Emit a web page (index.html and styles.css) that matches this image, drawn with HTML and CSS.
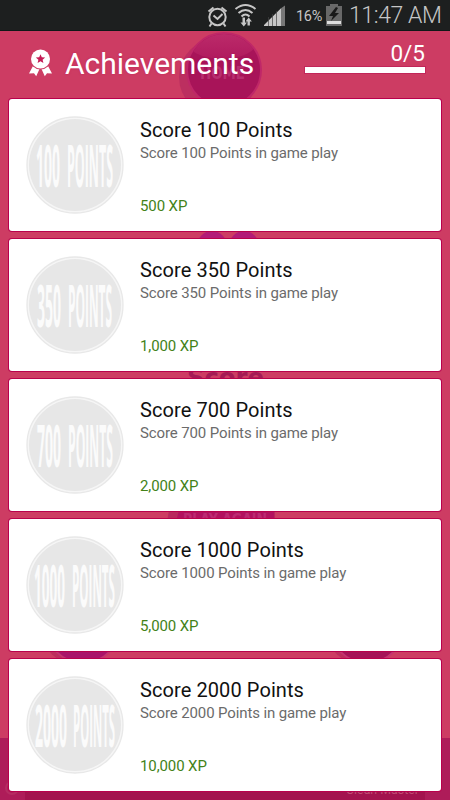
FILE: index.html
```html
<!DOCTYPE html>
<html lang="en">
<head>
<meta charset="utf-8">
<title>Achievements</title>
<link rel="stylesheet" href="styles.css">
</head>
<body>
<div class="screen">
  <svg class="backdrop" viewBox="0 0 450 800" aria-hidden="true">
    <defs>
      <linearGradient id="gloss" x1="0" y1="0" x2="0" y2="1">
        <stop offset="0" stop-color="#c23370"/><stop offset="1" stop-color="#b01a5e"/>
      </linearGradient>
      <clipPath id="home"><circle cx="224" cy="70" r="36"/></clipPath>
    </defs>
    <rect width="450" height="800" fill="#cd3c63"/>
    <circle cx="218" cy="77" r="39" fill="#bc2f60"/>
    <circle cx="224" cy="70" r="37" fill="#a81459" stroke="#bf2768" stroke-width="2"/>
    <ellipse cx="222" cy="40" rx="36" ry="19" fill="url(#gloss)" clip-path="url(#home)"/>
    <text x="200" y="79" class="ghost" font-size="18" textLength="45" lengthAdjust="spacingAndGlyphs" fill="#b83070">HOME</text>
    <circle cx="212" cy="246" r="15" fill="#b31b77"/><circle cx="244" cy="246" r="15" fill="#b31b77"/>
    <circle cx="212" cy="243" r="5" fill="#c22770"/><circle cx="244" cy="243" r="5" fill="#c22770"/>
    <text x="187" y="386" class="ghost" font-size="24" textLength="77" lengthAdjust="spacingAndGlyphs" fill="#a51b55">Score</text>
    <path d="M169 510h106v12H167z" fill="#b9285e"/><path d="M179 510h95v12H176z" fill="#b2125f"/>
    <text x="183" y="525" class="ghost" font-size="16" textLength="84" lengthAdjust="spacingAndGlyphs" fill="#bd2b72">PLAY AGAIN</text>
    <circle cx="78" cy="628" r="37" fill="#bd2d5d"/><circle cx="83" cy="626" r="37" fill="#aa1469" stroke="#c53370" stroke-width="2"/>
    <circle cx="363" cy="628" r="37" fill="#bd2d5d"/><circle cx="367" cy="626" r="37" fill="#a61357" stroke="#c53370" stroke-width="2"/>
    <rect y="738" width="450" height="62" fill="#ae1c59"/>
    <rect x="25" y="738" width="400" height="62" fill="#a3134e"/>
    <circle cx="12" cy="788" r="6" fill="none" stroke="#b52c62" stroke-width="2"/>
    <text x="346" y="794" font-size="13" textLength="73" lengthAdjust="spacingAndGlyphs" fill="#c04a74">Clean Master</text>
  </svg>

  <div class="status">
    <svg class="status-icons" viewBox="0 0 90 30" aria-hidden="true">
      <g fill="none" stroke="#c6c6c6" stroke-width="2">
        <circle cx="17.500" cy="17" r="8.200"/>
        <path d="M13.500 15.500l4 3.500 5-5M8.500 11.500l5-4M26.500 11.500l-5-4M11.500 23.500l-2 3M23.500 23.500l2 3"/>
        <path d="M35.500 9q10-8 20 0M38.500 13q7-6 14 0M41.500 16.500q4-4 8 0"/>
      </g>
      <path fill="#c6c6c6" d="M42.500 17.500h2.500v5h2l-3.200 4-3.300-4h2zM47.500 25.500v-4h-2l3.200-4 3.200 4h-2v4zM64 26V25L81 8.300V26z"/>
      <path d="M81 8.300l4-2.800V26h-4z" fill="#777"/>
      <path d="M68.500 17v9M72.500 14v12M76.500 11v15" stroke="#444" stroke-width=".7"/>
    </svg>
    <span class="percent">16%</span>
    <svg class="battery" viewBox="0 0 16 22" aria-hidden="true">
      <path d="M4 0h8v2h4v20H0V2h4z" fill="#686868"/><path d="M1 17h14v3H1z" fill="#dedede"/>
      <path d="M10 3L3 12h4l-2 5 8-8H9l3-5z" fill="#191919"/>
    </svg>
    <span class="time">11:47 AM</span>
  </div>

  <div class="header">
    <svg class="ribbon" viewBox="0 0 24 28" aria-hidden="true">
      <path fill="#fff" d="M5 16l6 4-3.300 7.300-2.200-3-5 .3zM19 16l-6 4 3.300 7.300 2.200-3 5 .3z"/>
      <circle cx="12" cy="10" r="10.500" fill="#cd3c63"/>
      <circle cx="12" cy="10" r="9.500" fill="#fff"/>
      <path fill="#c51c55" d="M12 5.200l1.300 3.100 3.400.3-2.600 2.200.8 3.300-2.900-1.800-2.900 1.800.8-3.300-2.600-2.200 3.400-.3z"/>
    </svg>
    <h1 class="title">Achievements</h1>
    <div class="progress"><span class="count">0/5</span><div class="bar"></div></div>
  </div>

  <div class="list">
    <div class="card">
      <svg class="badge" viewBox="0 0 98 98"><circle class="rim" cx="49" cy="49" r="48"/><circle class="disc" cx="49" cy="49" r="46"/>
        <text class="mark" x="10" y="70.500" textLength="24" lengthAdjust="spacingAndGlyphs">100</text><text class="mark" x="41" y="70.500" textLength="46" lengthAdjust="spacingAndGlyphs">POINTS</text></svg>
      <div class="info"><h2 class="name">Score 100 Points</h2><p class="desc">Score 100 Points in game play</p><p class="xp">500 XP</p></div>
    </div>
    <div class="card">
      <svg class="badge" viewBox="0 0 98 98"><circle class="rim" cx="49" cy="49" r="48"/><circle class="disc" cx="49" cy="49" r="46"/>
        <text class="mark" x="11" y="70.500" textLength="24" lengthAdjust="spacingAndGlyphs">350</text><text class="mark" x="42" y="70.500" textLength="44" lengthAdjust="spacingAndGlyphs">POINTS</text></svg>
      <div class="info"><h2 class="name">Score 350 Points</h2><p class="desc">Score 350 Points in game play</p><p class="xp">1,000 XP</p></div>
    </div>
    <div class="card">
      <svg class="badge" viewBox="0 0 98 98"><circle class="rim" cx="49" cy="49" r="48"/><circle class="disc" cx="49" cy="49" r="46"/>
        <text class="mark" x="11" y="70.500" textLength="24" lengthAdjust="spacingAndGlyphs">700</text><text class="mark" x="42" y="70.500" textLength="45" lengthAdjust="spacingAndGlyphs">POINTS</text></svg>
      <div class="info"><h2 class="name">Score 700 Points</h2><p class="desc">Score 700 Points in game play</p><p class="xp">2,000 XP</p></div>
    </div>
    <div class="card">
      <svg class="badge" viewBox="0 0 98 98"><circle class="rim" cx="49" cy="49" r="48"/><circle class="disc" cx="49" cy="49" r="46"/>
        <text class="mark" x="8" y="70.500" textLength="31" lengthAdjust="spacingAndGlyphs">1000</text><text class="mark" x="46" y="70.500" textLength="43" lengthAdjust="spacingAndGlyphs">POINTS</text></svg>
      <div class="info"><h2 class="name">Score 1000 Points</h2><p class="desc">Score 1000 Points in game play</p><p class="xp">5,000 XP</p></div>
    </div>
    <div class="card">
      <svg class="badge" viewBox="0 0 98 98"><circle class="rim" cx="49" cy="49" r="48"/><circle class="disc" cx="49" cy="49" r="46"/>
        <text class="mark" x="9" y="70.500" textLength="32" lengthAdjust="spacingAndGlyphs">2000</text><text class="mark" x="47" y="70.500" textLength="42" lengthAdjust="spacingAndGlyphs">POINTS</text></svg>
      <div class="info"><h2 class="name">Score 2000 Points</h2><p class="desc">Score 2000 Points in game play</p><p class="xp">10,000 XP</p></div>
    </div>
  </div>
</div>
</body>
</html>
```
FILE: styles.css
```css
* { box-sizing: border-box; margin: 0; padding: 0; }
body { font-family: Roboto, "Liberation Sans", sans-serif; background: #cd3c63; }
svg { display: block; flex: none; }
.screen { position: relative; width: 450px; height: 800px; overflow: hidden; }
.backdrop { position: absolute; left: 0; top: 0; width: 450px; height: 800px; }
.ghost { font-family: "DejaVu Sans", sans-serif; font-weight: bold; }
.status, .header, .list { position: relative; }
.status {
  height: 31px; display: flex; align-items: center; justify-content: flex-end;
  padding-right: 8px; background: #1d1f1f; border-bottom: 1px solid #101818; color: #c6c6c6;
}
.status-icons { width: 90px; height: 30px; }
.percent { width: 27px; margin-left: 6px; font-size: 14.5px; line-height: 30px; padding-top: 3px; letter-spacing: -.3px; }
.battery { width: 16px; height: 22px; margin: 0 7px 0 3px; }
.time { width: 93px; font-size: 23px; line-height: 30px; padding-top: 2px; font-weight: 300; letter-spacing: -.4px; white-space: nowrap; }
.header { height: 68px; display: flex; padding: 0 25px 0 28px; color: #fff; }
.ribbon { width: 25px; height: 28px; margin-top: 18px; }
.title { font-size: 30px; line-height: 36px; font-weight: 400; margin: 15px 0 0 12px; text-shadow: 0 0 2px rgba(190, 0, 75, .5); }
.progress { width: 120px; margin-left: auto; padding-top: 9px; text-align: right; }
.count { display: block; font-size: 22.5px; line-height: 27px; height: 27px; font-weight: 400; }
.bar { height: 6px; background: #fff; box-shadow: 0 0 0 1px #c22659; }
.list { display: flex; flex-direction: column; gap: 8px; padding: 0 9px; }
.card {
  height: 132px; display: flex; background: #fff; border-radius: 3px;
  box-shadow: 0 0 0 1px #b9004c; padding: 17px 0 0 17px;
}
.badge { width: 98px; height: 98px; overflow: visible; }
.rim { fill: #f6f6f6; stroke: #e8e8e8; stroke-width: 1.3; }
.disc { fill: #e7e7e7; }
.mark { font-family: "Open Sans", sans-serif; font-weight: 700; font-size: 59px; fill: #fbfbfb; }
.info { margin-left: 16px; }
.name { font-size: 20px; line-height: 24px; font-weight: 400; color: #111; margin-top: 2px; letter-spacing: .09px; }
.desc { font-size: 15px; line-height: 20px; color: #6b6b6b; margin-top: 1px; letter-spacing: -.12px; }
.xp { font-size: 15px; line-height: 20px; color: #438218; margin-top: 33px; letter-spacing: -.1px; }
```
